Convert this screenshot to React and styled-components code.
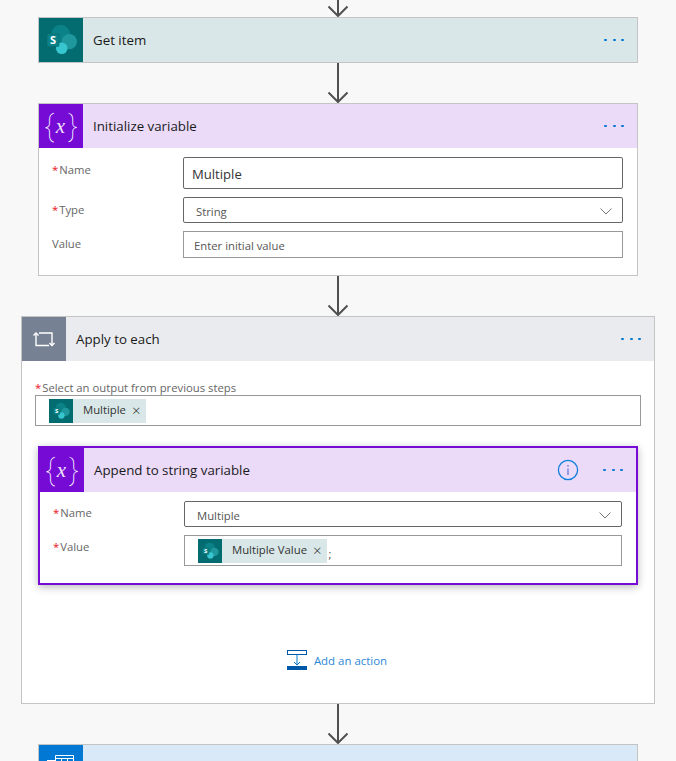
import React from "react";
import styled, { createGlobalStyle } from "styled-components";

const Global = createGlobalStyle`
  html, body {
    margin: 0;
    padding: 0;
    background: #f8f8f8;
    font-family: "Open Sans", "Noto Sans", sans-serif;
  }
`;

const Page = styled.div`
  height: 761px;
  overflow: hidden;
  background: #f8f8f8;
  display: flex;
  flex-direction: column;
  align-items: center;
`;

const ConnectorWrap = styled.div`
  height: ${(p) => p.$h}px;
  flex: none;
  display: flex;
  align-items: flex-end;
  svg {
    display: block;
  }
`;

const Card = styled.div`
  box-sizing: border-box;
  width: ${(p) => p.$w}px;
  flex: none;
  background: #fff;
  border: ${(p) => (p.$active ? "2px solid #770bd6" : "1px solid #c4c4c4")};
  box-shadow: ${(p) => (p.$active ? "0 2px 8px rgba(0,0,0,0.28)" : "none")};
`;

const Header = styled.div`
  height: 44px;
  display: flex;
  align-items: center;
  background: ${(p) => p.$bg};
  padding-right: 13px;
`;

const IconBox = styled.div`
  width: 44px;
  height: 44px;
  flex: none;
  display: flex;
  align-items: center;
  justify-content: center;
  background: ${(p) => p.$bg};
  overflow: hidden;
  svg {
    display: block;
  }
`;

const Title = styled.div`
  flex: 1;
  margin-left: 10px;
  font-size: 13.3px;
  line-height: 18px;
  color: #1a1a1a;
`;

const Dots = styled.div`
  display: flex;
  gap: 5.6px;
  span {
    width: 2.8px;
    height: 2.8px;
    border-radius: 50%;
    background: #0078d4;
  }
`;

const InfoWrap = styled.div`
  margin-right: 24px;
  display: flex;
`;

const VarGlyph = styled.div`
  font-family: "Roboto", sans-serif;
  color: #fff;
  font-size: 29px;
  line-height: 44px;
  font-weight: 100;
  display: flex;
  align-items: center;
  i {
    font-family: "Liberation Serif", serif;
    font-size: 21px;
    margin: 0 3px 0 2px;
    opacity: 0.88;
  }
`;

const Form = styled.div`
  display: grid;
  grid-template-columns: 131px 1fr;
  row-gap: 8px;
  padding: 9px 14px 17px 13px;
`;

const Label = styled.div`
  font-size: 11.3px;
  color: #666;
  line-height: 16px;
  padding-top: ${(p) => p.$top}px;
  b {
    color: #e81123;
    font-weight: 400;
    margin-right: 1px;
  }
`;

const Field = styled.div`
  box-sizing: border-box;
  height: ${(p) => p.$h}px;
  display: flex;
  align-items: center;
  justify-content: space-between;
  border: 1px solid ${(p) => (p.$strong ? "#666" : "#999")};
  border-radius: ${(p) => (p.$strong ? "2px" : "0")};
  padding: ${(p) => p.$top || 1}px ${(p) => p.$right || 0}px 0 ${(p) => p.$left}px;
  font-size: ${(p) => p.$size || 11.3}px;
  color: ${(p) => p.$color || "#555"};
  background: #fff;
`;

const TokenBox = styled(Field)`
  justify-content: flex-start;
  padding-top: 0;
`;

const Chip = styled.div`
  box-sizing: border-box;
  height: 24px;
  display: flex;
  align-items: center;
  padding-bottom: 2px;
  background: #d9e7e8;
  color: #333;
  font-size: 11.3px;
`;

const ChipIcon = styled.div`
  width: 24px;
  height: 24px;
  margin: 0 10px -2px 0;
  flex: none;
  background: #036c70;
  svg {
    display: block;
  }
`;

const ChipClose = styled.span`
  margin: 2px 5px 0 6px;
  font-size: 15px;
  font-weight: 300;
  line-height: 1;
`;

const Semi = styled.span`
  margin-left: 2px;
  font-size: 11px;
  color: #444;
  padding-top: 6px;
`;

const LoopBody = styled.div`
  padding: 20px 13px 0;
`;

const LoopLabel = styled.div`
  font-size: 11.3px;
  color: #666;
  line-height: 14px;
  b {
    color: #e81123;
    font-weight: 400;
    margin-right: 1px;
  }
`;

const Nested = styled.div`
  margin: 20px 3px 0;
`;

const AddRow = styled.div`
  display: flex;
  justify-content: center;
  align-items: center;
  gap: 7px;
  height: 20px;
  padding: 65px 2px 33px 0;
  color: #2b88d8;
  font-size: 11.45px;
  svg {
    display: block;
  }
`;

const Connector = ({ h }) => (
  <ConnectorWrap $h={h}>
    <svg width="22" height={h} viewBox={`0 0 22 ${h}`}>
      <path d={`M11 0V${h - 1}`} stroke="#505050" strokeWidth="2" fill="none" />
      <path d={`M1.5 ${h - 10.5}L11 ${h - 1}L20.5 ${h - 10.5}`} stroke="#505050" strokeWidth="2" fill="none" />
    </svg>
  </ConnectorWrap>
);

const More = () => (
  <Dots>
    <span />
    <span />
    <span />
  </Dots>
);

const SharePointIcon = ({ size }) => (
  <svg width={size} height={size} viewBox="0 0 44 44">
    <circle cx="21.7" cy="16" r="9.3" fill="#0b8287" />
    <circle cx="30.3" cy="23.7" r="7.6" fill="#1f989d" />
    <circle cx="22.7" cy="30.3" r="5.8" fill="#37c6d0" />
    <rect x="8" y="16" width="12" height="12.5" rx="1" fill="#0a8186" stroke="#04666a" strokeWidth="0.5" />
    <text x="14" y="26.3" textAnchor="middle" fontSize="11" fontWeight="700" fill="#fff" fontFamily="Noto Sans, sans-serif">S</text>
  </svg>
);

const VariableIcon = () => (
  <VarGlyph>
    {"{"}
    <i>x</i>
    {"}"}
  </VarGlyph>
);

const LoopIcon = () => (
  <svg width="24" height="24" viewBox="0 0 24 24" fill="none" stroke="#fff" strokeWidth="1.4">
    <path d="M4 6V18.5H17" />
    <path d="M1.5 8.5L4 6L6.5 8.5" />
    <path d="M7 6H20V18.5" />
    <path d="M17.5 16L20 18.5L22.5 16" />
  </svg>
);

const TableIcon = () => (
  <svg width="44" height="44" viewBox="0 0 44 44" fill="none" stroke="#fff" strokeWidth="1">
    <path d="M16.5 10.5H34.5V24H16.5Z" />
    <path d="M16.5 13.5H34.5M22.5 13.5V24M28.5 13.5V24" />
    <path d="M8 16H16" strokeWidth="2" />
  </svg>
);

const Chevron = () => (
  <svg width="12" height="7" viewBox="0 0 12 7" fill="none" stroke="#666" strokeWidth="0.9">
    <path d="M0.5 0.5L6 6L11.5 0.5" />
  </svg>
);

const InfoIcon = () => (
  <svg width="22" height="22" viewBox="0 0 22 22" fill="none">
    <circle cx="11" cy="11" r="9.6" stroke="#0f7fdc" strokeWidth="1.3" />
    <path d="M11 9.5V16" stroke="#7a7fe0" strokeWidth="1.4" />
    <circle cx="11" cy="6.8" r="0.9" fill="#7a7fe0" />
  </svg>
);

const AddIcon = () => (
  <svg width="20" height="20" viewBox="0 0 20 20" fill="none">
    <rect x="0.5" y="0.5" width="19" height="4" stroke="#0058a8" />
    <path d="M10 5V15" stroke="#0078d4" />
    <path d="M7 12L10 15L13 12" stroke="#0078d4" />
    <rect x="0" y="16" width="20" height="4" fill="#0058a8" />
  </svg>
);

const Req = () => <b>*</b>;

export default function App() {
  return (
    <Page>
      <Global />
      <Connector h={17} />
      <Card $w={600}>
        <Header $bg="#d9e7e8">
          <IconBox $bg="#036c70">
            <SharePointIcon size={44} />
          </IconBox>
          <Title>Get item</Title>
          <More />
        </Header>
      </Card>
      <Connector h={40} />
      <Card $w={600}>
        <Header $bg="#ebdaf8">
          <IconBox $bg="#770bd6">
            <VariableIcon />
          </IconBox>
          <Title>Initialize variable</Title>
          <More />
        </Header>
        <Form>
          <Label $top={5}>
            <Req />Name
          </Label>
          <Field $h={32} $strong $left={8} $size={13.1} $color="#333">Multiple</Field>
          <Label $top={5}>
            <Req />Type
          </Label>
          <Field $h={26} $top={3} $strong $left={12} $right={10}>
            String
            <Chevron />
          </Field>
          <Label $top={5}>Value</Label>
          <Field $h={27} $left={10}>Enter initial value</Field>
        </Form>
      </Card>
      <Connector h={40} />
      <Card $w={634}>
        <Header $bg="#e9ebee">
          <IconBox $bg="#768294">
            <LoopIcon />
          </IconBox>
          <Title>Apply to each</Title>
          <More />
        </Header>
        <LoopBody>
          <LoopLabel>
            <Req />Select an output from previous steps
          </LoopLabel>
          <TokenBox $h={31} $left={13}>
            <Chip>
              <ChipIcon>
                <SharePointIcon size={24} />
              </ChipIcon>
              Multiple
              <ChipClose>×</ChipClose>
            </Chip>
          </TokenBox>
          <Nested>
            <Card $w={600} $active>
              <Header $bg="#ebdaf8">
                <IconBox $bg="#770bd6">
                  <VariableIcon />
                </IconBox>
                <Title>Append to string variable</Title>
                <InfoWrap>
                  <InfoIcon />
                </InfoWrap>
                <More />
              </Header>
              <Form>
                <Label $top={4}>
                  <Req />Name
                </Label>
                <Field $h={26} $top={3} $strong $left={12} $right={10}>
                  Multiple
                  <Chevron />
                </Field>
                <Label $top={4}>
                  <Req />Value
                </Label>
                <TokenBox $h={31} $left={13}>
                  <Chip>
                    <ChipIcon>
                      <SharePointIcon size={24} />
                    </ChipIcon>
                    Multiple Value
                    <ChipClose>×</ChipClose>
                  </Chip>
                  <Semi>;</Semi>
                </TokenBox>
              </Form>
            </Card>
          </Nested>
          <AddRow>
            <AddIcon />
            Add an action
          </AddRow>
        </LoopBody>
      </Card>
      <Connector h={40} />
      <Card $w={600}>
        <Header $bg="#d9e9f8">
          <IconBox $bg="#0078d4">
            <TableIcon />
          </IconBox>
        </Header>
      </Card>
    </Page>
  );
}
